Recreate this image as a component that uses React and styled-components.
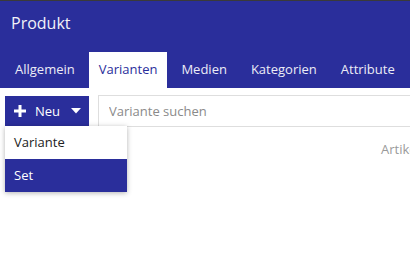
import React from 'react'
import styled, { createGlobalStyle } from 'styled-components'

const BLUE = '#2a2e9b'

const Global = createGlobalStyle`
  html, body {
    margin: 0;
    padding: 0;
    background: #fff;
    overflow: hidden;
  }
  body {
    font-family: 'Open Sans', 'Noto Sans', sans-serif;
  }
`

const App = () => {
  return (
    <Page>
      <Global />
      <Header>
        <Title>Produkt</Title>
        <Tabs>
          <Tab>Allgemein</Tab>
          <Tab active>Varianten</Tab>
          <Tab>Medien</Tab>
          <Tab>Kategorien</Tab>
          <Tab>Attribute</Tab>
        </Tabs>
      </Header>

      <Body>
        <Toolbar>
          <NewWrap>
            <NewButton>
              <svg width="12" height="12" viewBox="0 0 12 12">
                <path d="M4.5 0h3v4.5H12v3H7.5V12h-3V7.5H0v-3h4.5z" fill="#fff" />
              </svg>
              <span>Neu</span>
              <svg width="10" height="6" viewBox="0 0 10 6">
                <path d="M0 0h10L5 5.5z" fill="#fff" />
              </svg>
            </NewButton>
            <Menu>
              <MenuItem>Variante</MenuItem>
              <MenuItem selected>Set</MenuItem>
            </Menu>
          </NewWrap>
          <Search placeholder="Variante suchen" />
        </Toolbar>

        <TableHead>
          <span></span>
          <ColLabel>Artikelnummer</ColLabel>
        </TableHead>
      </Body>
    </Page>
  )
}

const Page = styled.div`
  width: 410px;
  height: 253px;
  overflow: hidden;
`

const Header = styled.header`
  background: ${BLUE};
  border-top: 1px solid #3a3a3a;
  height: 87px;
  display: flex;
  flex-direction: column;
`

const Title = styled.h1`
  margin: 0;
  height: 51px;
  padding: 0 11px;
  display: flex;
  align-items: center;
  font-size: 16px;
  font-weight: 400;
  color: #f2f2f8;
  line-height: 1;
  padding-bottom: 8px;
  box-sizing: border-box;
`

const Tabs = styled.nav`
  display: flex;
  gap: 4px;
  padding-left: 5px;
  height: 36px;
  white-space: nowrap;
`

const Tab = styled.div`
  display: flex;
  align-items: center;
  padding: 0 10px 2px;
  font-size: 13px;
  color: ${p => (p.active ? BLUE : '#ececf6')};
  background: ${p => (p.active ? '#fff' : 'transparent')};
`

const Body = styled.div`
  padding-top: 7px;
`

const Toolbar = styled.div`
  display: flex;
  align-items: flex-start;
  gap: 9px;
  padding-left: 5px;
`

const NewWrap = styled.div`
  position: relative;
  padding-top: 1px;
`

const NewButton = styled.button`
  display: flex;
  align-items: center;
  gap: 10px;
  width: 84px;
  height: 30px;
  padding: 0 0 0 9px;
  border: 0;
  background: ${BLUE};
  color: #fff;
  font-family: 'Open Sans', sans-serif;
  font-size: 13px;
  box-sizing: border-box;

  span {
    margin-left: -1px;
    margin-right: 1px;
  }
`

const Menu = styled.div`
  position: absolute;
  top: 31px;
  left: 0;
  width: 122px;
  background: #fff;
  box-shadow: 0 1px 5px rgba(0, 0, 0, 0.3);
  z-index: 2;
`

const MenuItem = styled.div`
  height: 32px;
  display: flex;
  align-items: center;
  padding: 0 9px 1px;
  font-size: 13px;
  color: ${p => (p.selected ? '#fff' : '#222')};
  background: ${p => (p.selected ? BLUE : '#fff')};
`

const Search = styled.input`
  flex: 1;
  height: 32px;
  box-sizing: border-box;
  border: 1px solid #dedede;
  border-right: 0;
  padding: 0 10px;
  font-family: 'Open Sans', sans-serif;
  font-size: 13px;
  outline: none;

  &::placeholder {
    color: #8a8a8a;
  }
`

const TableHead = styled.div`
  display: grid;
  grid-template-columns: 381px max-content;
  margin-top: 10px;
  height: 24px;
  align-items: center;
  white-space: nowrap;
`

const ColLabel = styled.span`
  font-size: 13px;
  color: #9a9a9a;
`

export default App
